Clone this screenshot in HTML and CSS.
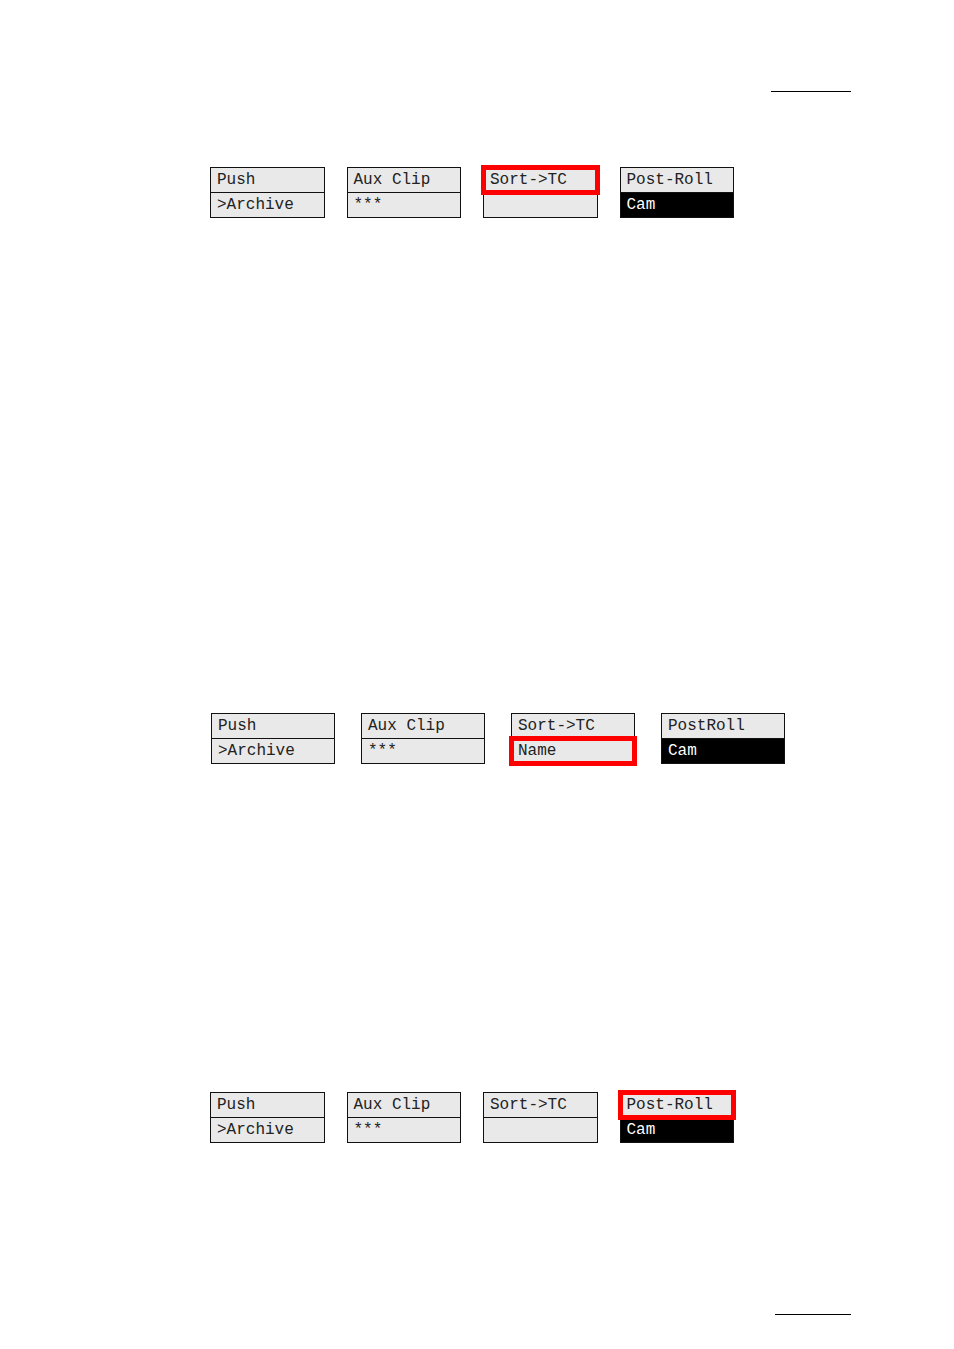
FILE: index.html
```html
<!DOCTYPE html>
<html lang="en">
<head>
  <meta charset="UTF-8" />
  <title>Archive menu</title>
  <link rel="stylesheet" href="styles.css">
</head>
<body>

  <hr class="rule header-rule">

  <main>
    <!-- Sort by TC -->
    <div class="menu sort-menu">
      <div class="key">
        <div class="cell">Push</div>
        <div class="cell">&gt;Archive</div>
      </div>
      <div class="key">
        <div class="cell">Aux Clip</div>
        <div class="cell">***</div>
      </div>
      <div class="key">
        <div class="cell selected">Sort-&gt;TC</div>
        <div class="cell"></div>
      </div>
      <div class="key">
        <div class="cell">Post-Roll</div>
        <div class="cell active">Cam</div>
      </div>
    </div>

    <!-- Name -->
    <div class="menu name-menu">
      <div class="key">
        <div class="cell">Push</div>
        <div class="cell">&gt;Archive</div>
      </div>
      <div class="key">
        <div class="cell">Aux Clip</div>
        <div class="cell">***</div>
      </div>
      <div class="key">
        <div class="cell">Sort-&gt;TC</div>
        <div class="cell selected">Name</div>
      </div>
      <div class="key">
        <div class="cell">PostRoll</div>
        <div class="cell active">Cam</div>
      </div>
    </div>

    <!-- Post-roll -->
    <div class="menu">
      <div class="key">
        <div class="cell">Push</div>
        <div class="cell">&gt;Archive</div>
      </div>
      <div class="key">
        <div class="cell">Aux Clip</div>
        <div class="cell">***</div>
      </div>
      <div class="key">
        <div class="cell">Sort-&gt;TC</div>
        <div class="cell"></div>
      </div>
      <div class="key">
        <div class="cell selected">Post-Roll</div>
        <div class="cell active">Cam</div>
      </div>
    </div>
  </main>

  <hr class="rule footer-rule">

</body>
</html>
```

FILE: styles.css
```css
* {
  box-sizing: border-box;
}

body {
  display: flex;
  flex-direction: column;
  min-height: 100vh;
  margin: 0;
  padding: 91px 103px 34px 210px;
  background: #fff;
  color: #222;
  font-family: "Courier New", "Liberation Mono", monospace;
  font-size: 16px;
  line-height: 24px;
}

.rule {
  height: 1px;
  margin: 0 0 0 auto;
  border: none;
  background: #000;
}

.header-rule {
  width: 80px;
}

.footer-rule {
  width: 76px;
  margin-top: auto;
}

main {
  padding: 75px 0;
}

.menu {
  display: grid;
  grid-template-columns: repeat(4, 1fr);
  gap: 22px;
  max-width: 524px;
}

.sort-menu {
  margin-bottom: 495px;
}

.name-menu {
  gap: 26px;
  max-width: 574px;
  margin-bottom: 328px;
  margin-left: 1px;
}

.key {
  border: 1px solid #111;
  background: #e9e9e9;
}

.cell {
  position: relative;
  height: 24px;
  padding: 0 6px;
  white-space: nowrap;
}

.cell:first-child {
  height: 25px;
  border-bottom: 1px solid #111;
}

.cell.active {
  background: #000;
  color: #fff;
}

/* red frame around the chosen function */
.cell.selected::after {
  content: "";
  position: absolute;
  inset: -3px;
  z-index: 1;
  border: 5px solid #f00;
}
```
